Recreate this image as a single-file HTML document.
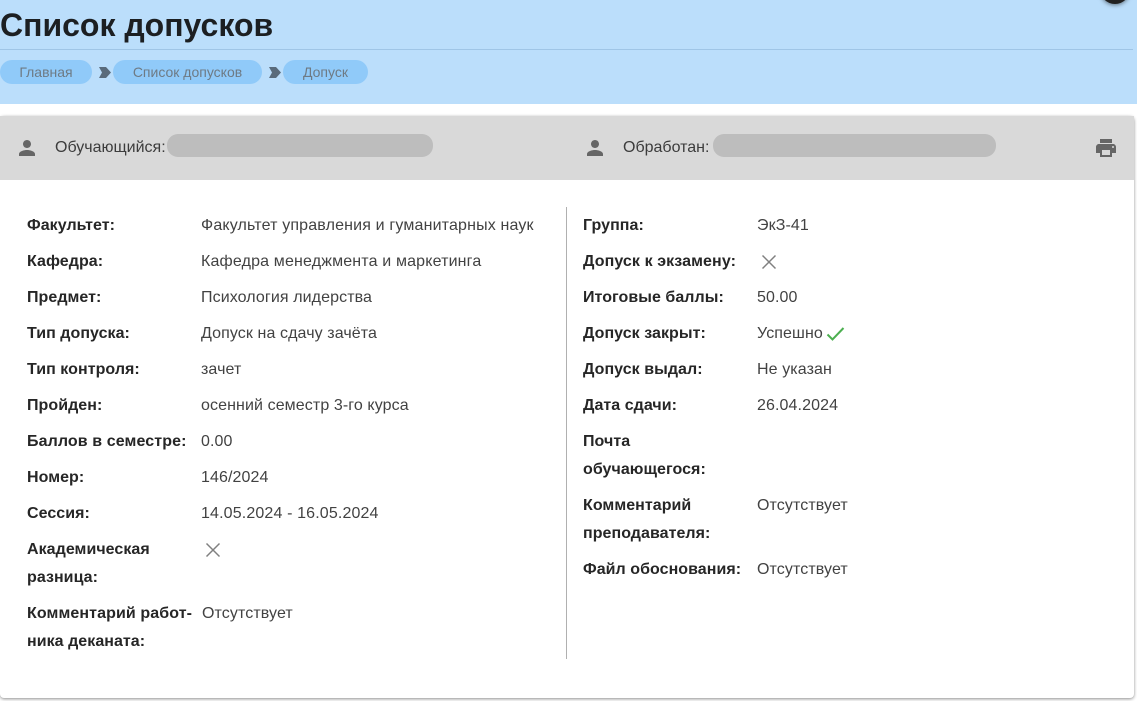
<!DOCTYPE html>
<html lang="ru">
<head>
<meta charset="utf-8">
<title>Список допусков</title>
<style>
html,body{margin:0;padding:0;width:1137px;height:701px;overflow:hidden;background:#fff;font-family:"Liberation Sans","Noto Sans CJK SC",sans-serif;}
.a{position:absolute;white-space:nowrap;}
.l{font-size:16px;font-weight:700;letter-spacing:.05px;color:#262626;line-height:28px;height:28px;margin-top:2px;}
.v{font-size:16px;letter-spacing:.1px;color:#424242;line-height:28px;height:28px;margin-top:2px;}
.pill{background:#90caf9;border-radius:12px;height:24px;top:60px;line-height:24px;font-size:14px;color:#6e7a84;text-align:center;}
</style>
</head>
<body>
<div class="a" style="left:0;top:0;width:1137px;height:104px;background:#bbdefb"></div>
<div class="a" style="left:0;top:49px;width:1133px;height:1px;background:#9fc5e6"></div>
<div class="a" style="left:0;top:7px;font-size:32px;font-weight:700;color:#1c1f22;line-height:36px;">Список допусков</div>
<div class="a pill" style="left:0;width:92px;">Главная</div>
<svg class="a" style="left:99px;top:67px" width="13" height="11"><path d="M0 0H7L12 5.500 7 11H0L3 5.500Z" fill="#5a6b7b"/></svg>
<div class="a pill" style="left:113px;width:149px;">Список допусков</div>
<svg class="a" style="left:269px;top:67px" width="13" height="11"><path d="M0 0H7L12 5.500 7 11H0L3 5.500Z" fill="#5a6b7b"/></svg>
<div class="a pill" style="left:283px;width:85px;">Допуск</div>
<div class="a" style="left:1100px;top:-26px;width:30px;height:30px;border-radius:50%;background:#212121;box-shadow:0 1px 4px rgba(0,0,0,.5)"></div>

<div class="a" style="left:0;top:116px;width:1134px;height:582px;background:#fff;border-radius:4px;box-shadow:0 1px 3px rgba(0,0,0,.45)"></div>
<div class="a" style="left:0;top:116px;width:1134px;height:64px;background:#d9d9d9"></div>

<svg class="a" style="left:15px;top:136px" width="24" height="24" viewBox="0 0 24 24"><path fill="#666" d="M12 12c2.200 0 4-1.800 4-4s-1.800-4-4-4-4 1.800-4 4 1.800 4 4 4zm0 2c-2.700 0-8 1.300-8 4v2h16v-2c0-2.700-5.300-4-8-4z"/></svg>
<div class="a" style="left:55px;top:134px;font-size:16px;line-height:28px;color:#3c3c3c">Обучающийся:</div>
<div class="a" style="left:167px;top:134px;width:266px;height:23px;border-radius:11px;background:#bdbdbd"></div>
<svg class="a" style="left:583px;top:136px" width="24" height="24" viewBox="0 0 24 24"><path fill="#666" d="M12 12c2.200 0 4-1.800 4-4s-1.800-4-4-4-4 1.800-4 4 1.800 4 4 4zm0 2c-2.700 0-8 1.300-8 4v2h16v-2c0-2.700-5.300-4-8-4z"/></svg>
<div class="a" style="left:623px;top:134px;font-size:16px;line-height:28px;color:#3c3c3c">Обработан:</div>
<div class="a" style="left:713px;top:134px;width:283px;height:23px;border-radius:11px;background:#bdbdbd"></div>
<svg class="a" style="left:1094px;top:136px" width="24" height="24" viewBox="0 0 24 24"><path fill="#666" d="M19 8H5c-1.660 0-3 1.340-3 3v6h4v4h12v-4h4v-6c0-1.660-1.340-3-3-3zm-3 11H8v-5h8v5zm3-7c-.55 0-1-.45-1-1s.45-1 1-1 1 .45 1 1-.45 1-1 1zm-1-9H6v4h12V3z"/></svg>

<div class="a" style="left:566px;top:207px;width:1px;height:452px;background:#b0b0b0"></div>

<div class="a l" style="left:27px;top:210px">Факультет:</div>
<div class="a v" style="left:201px;top:210px;letter-spacing:.16px">Факультет управления и гуманитарных наук</div>
<div class="a l" style="left:27px;top:246px">Кафедра:</div>
<div class="a v" style="left:201px;top:246px;letter-spacing:.16px">Кафедра менеджмента и маркетинга</div>
<div class="a l" style="left:27px;top:282px">Предмет:</div>
<div class="a v" style="left:201px;top:282px">Психология лидерства</div>
<div class="a l" style="left:27px;top:318px">Тип допуска:</div>
<div class="a v" style="left:201px;top:318px">Допуск на сдачу зачёта</div>
<div class="a l" style="left:27px;top:354px">Тип контроля:</div>
<div class="a v" style="left:201px;top:354px">зачет</div>
<div class="a l" style="left:27px;top:390px">Пройден:</div>
<div class="a v" style="left:201px;top:390px">осенний семестр 3-го курса</div>
<div class="a l" style="left:27px;top:426px;letter-spacing:.1px">Баллов в семестре:</div>
<div class="a v" style="left:201px;top:426px">0.00</div>
<div class="a l" style="left:27px;top:462px">Номер:</div>
<div class="a v" style="left:201px;top:462px">146/2024</div>
<div class="a l" style="left:27px;top:498px">Сессия:</div>
<div class="a v" style="left:201px;top:498px;letter-spacing:.14px">14.05.2024 - 16.05.2024</div>
<div class="a l" style="left:27px;top:534px">Академическая</div>
<div class="a l" style="left:27px;top:562px">разница:</div>
<svg class="a" style="left:205px;top:542px" width="16" height="16"><path d="M1.500 1.500L14.500 14.500M14.500 1.500L1.500 14.500" stroke="#808080" stroke-width="1.500" fill="none"/></svg>
<div class="a l" style="left:27px;top:598px;letter-spacing:.1px">Комментарий работ-</div>
<div class="a l" style="left:27px;top:626px">ника деканата:</div>
<div class="a v" style="left:202px;top:598px">Отсутствует</div>

<div class="a l" style="left:583px;top:210px">Группа:</div>
<div class="a v" style="left:757px;top:210px">ЭкЗ-41</div>
<div class="a l" style="left:583px;top:246px;letter-spacing:.1px">Допуск к экзамену:</div>
<svg class="a" style="left:761px;top:254px" width="16" height="16"><path d="M1.500 1.500L14.500 14.500M14.500 1.500L1.500 14.500" stroke="#808080" stroke-width="1.500" fill="none"/></svg>
<div class="a l" style="left:583px;top:282px">Итоговые баллы:</div>
<div class="a v" style="left:757px;top:282px">50.00</div>
<div class="a l" style="left:583px;top:318px">Допуск закрыт:</div>
<div class="a v" style="left:757px;top:318px">Успешно</div>
<svg class="a" style="left:826px;top:326px" width="20" height="16"><path d="M1.500 8.500L6.500 13.500L17.500 2" stroke="#4caf50" stroke-width="2" fill="none"/></svg>
<div class="a l" style="left:583px;top:354px">Допуск выдал:</div>
<div class="a v" style="left:757px;top:354px">Не указан</div>
<div class="a l" style="left:583px;top:390px">Дата сдачи:</div>
<div class="a v" style="left:757px;top:390px">26.04.2024</div>
<div class="a l" style="left:583px;top:426px">Почта</div>
<div class="a l" style="left:583px;top:454px">обучающегося:</div>
<div class="a l" style="left:583px;top:490px">Комментарий</div>
<div class="a l" style="left:583px;top:518px">преподавателя:</div>
<div class="a v" style="left:757px;top:490px">Отсутствует</div>
<div class="a l" style="left:583px;top:554px">Файл обоснования:</div>
<div class="a v" style="left:757px;top:554px">Отсутствует</div>
</body>
</html>
